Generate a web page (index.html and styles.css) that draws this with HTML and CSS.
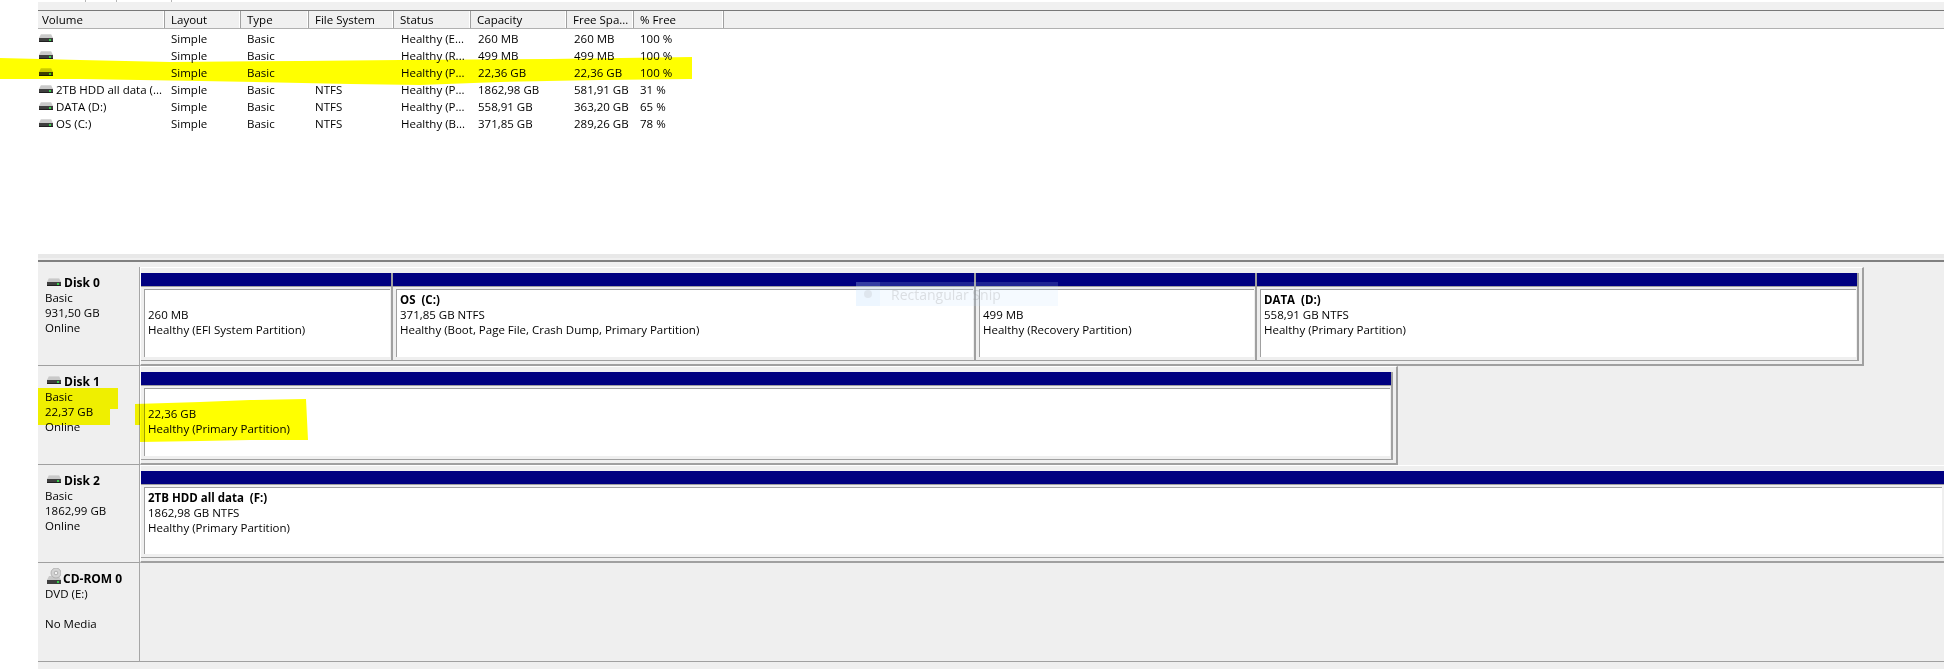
FILE: index.html
```html
<!DOCTYPE html>
<html lang="en">
<head>
<meta charset="utf-8">
<title>Disk Management</title>
<link rel="stylesheet" href="styles.css">
</head>
<body>
<svg width="0" height="0" class="defs">
  <symbol id="hdd" viewBox="0 0 14 8">
    <path d="M2 0H12L14 4H0Z" fill="#c9c9c9"/>
    <path d="M2 0H12" stroke="#e8e8e8" stroke-width="1"/>
    <rect x="0" y="4" width="14" height="4" fill="#3f3f3f"/>
    <rect x="0" y="7" width="14" height="1" fill="#1f1f1f"/>
    <rect x="10" y="5" width="2" height="2" fill="#35d04a"/>
  </symbol>
  <symbol id="cd" viewBox="0 0 14 16">
    <path d="M2 8H12L14 12H0Z" fill="#c9c9c9"/>
    <rect x="0" y="12" width="14" height="4" fill="#3f3f3f"/>
    <rect x="10" y="13" width="2" height="2" fill="#35d04a"/>
    <circle cx="9" cy="5" r="5" fill="#d4d4d4" stroke="#a8a8a8" stroke-width=".8"/>
    <circle cx="9" cy="5" r="1.8" fill="#f4f4f4" stroke="#8f8f8f" stroke-width=".6"/>
  </symbol>
</svg>

<main class="console">
  <div class="ticks"><i class="tick tick-a"></i><i class="tick tick-b"></i><i class="tick tick-c"></i></div>
  <div class="band"></div>

  <section class="volumes">
    <div class="head">
      <div class="hcell hcell-first">Volume</div>
      <div class="hcell">Layout</div>
      <div class="hcell">Type</div>
      <div class="hcell">File System</div>
      <div class="hcell">Status</div>
      <div class="hcell">Capacity</div>
      <div class="hcell">Free Spa...</div>
      <div class="hcell">% Free</div>
    </div>
    <div class="vrow"><div class="vol"><svg class="ico-s"><use href="#hdd"/></svg></div><div>Simple</div><div>Basic</div><div></div><div>Healthy (E...</div><div>260 MB</div><div>260 MB</div><div>100 %</div></div>
    <div class="vrow"><div class="vol"><svg class="ico-s"><use href="#hdd"/></svg></div><div>Simple</div><div>Basic</div><div></div><div>Healthy (R...</div><div>499 MB</div><div>499 MB</div><div>100 %</div></div>
    <div class="vrow"><div class="vol"><svg class="ico-s"><use href="#hdd"/></svg></div><div>Simple</div><div>Basic</div><div></div><div>Healthy (P...</div><div>22,36 GB</div><div>22,36 GB</div><div>100 %</div></div>
    <div class="vrow"><div class="vol"><svg class="ico-s"><use href="#hdd"/></svg>2TB HDD all data (...</div><div>Simple</div><div>Basic</div><div>NTFS</div><div>Healthy (P...</div><div>1862,98 GB</div><div>581,91 GB</div><div>31 %</div></div>
    <div class="vrow"><div class="vol"><svg class="ico-s"><use href="#hdd"/></svg>DATA (D:)</div><div>Simple</div><div>Basic</div><div>NTFS</div><div>Healthy (P...</div><div>558,91 GB</div><div>363,20 GB</div><div>65 %</div></div>
    <div class="vrow"><div class="vol"><svg class="ico-s"><use href="#hdd"/></svg>OS (C:)</div><div>Simple</div><div>Basic</div><div>NTFS</div><div>Healthy (B...</div><div>371,85 GB</div><div>289,26 GB</div><div>78 %</div></div>
  </section>

  <div class="splitter"></div>

  <section class="disks">
    <div class="disk">
      <div class="label"><div class="title"><svg class="ico-s"><use href="#hdd"/></svg>Disk 0</div><div>Basic</div><div>931,50 GB</div><div>Online</div></div>
      <div class="map"><div class="box">
        <div class="part" style="width:252px"><div class="bar"></div><div class="body"><div class="name"></div><div>260 MB</div><div>Healthy (EFI System Partition)</div></div></div>
        <div class="part" style="width:583px"><div class="bar"></div><div class="body"><div class="name">OS&nbsp; (C:)</div><div>371,85 GB NTFS</div><div>Healthy (Boot, Page File, Crash Dump, Primary Partition)</div></div></div>
        <div class="part" style="width:281px"><div class="bar"></div><div class="body"><div class="name"></div><div>499 MB</div><div>Healthy (Recovery Partition)</div></div></div>
        <div class="part" style="width:602px"><div class="bar"></div><div class="body"><div class="name">DATA&nbsp; (D:)</div><div>558,91 GB NTFS</div><div>Healthy (Primary Partition)</div></div></div>
      </div></div>
    </div>
    <div class="disk">
      <div class="label"><div class="title"><svg class="ico-s"><use href="#hdd"/></svg>Disk 1</div><div>Basic</div><div>22,37 GB</div><div>Online</div></div>
      <div class="map"><div class="box">
        <div class="part" style="width:1252px"><div class="bar"></div><div class="body"><div class="name"></div><div>22,36 GB</div><div>Healthy (Primary Partition)</div></div></div>
      </div></div>
    </div>
    <div class="disk">
      <div class="label"><div class="title"><svg class="ico-s"><use href="#hdd"/></svg>Disk 2</div><div>Basic</div><div>1862,99 GB</div><div>Online</div></div>
      <div class="map"><div class="box">
        <div class="part part-open" style="width:1804px"><div class="bar"></div><div class="body"><div class="name">2TB HDD all data&nbsp; (F:)</div><div>1862,98 GB NTFS</div><div>Healthy (Primary Partition)</div></div></div>
      </div></div>
    </div>
    <div class="disk">
      <div class="label"><div class="title title-cd"><svg class="ico-cd"><use href="#cd"/></svg>CD-ROM 0</div><div>DVD (E:)</div><div class="blank"></div><div>No Media</div></div>
      <div class="map map-empty"></div>
    </div>
  </section>
</main>

<div class="snip"><span class="snip-icon"><i class="snip-dot"></i></span><span class="snip-text">Rectangular Snip</span></div>

<svg class="marker" viewBox="0 0 1944 669" width="1944" height="669" aria-hidden="true">
  <polygon points="0,58 80,60 170,62 300,61 400,60 550,59 692,57 692,79 600,80 500,82 420,85 350,84 200,81 80,79 0,79"/>
  <polygon points="38,388 118,388 118,409 110,409 110,425 38,425"/>
  <polygon points="135,404 200,402 250,400 306,399 308,440 250,440 200,441 140,442 140,425 135,425"/>
</svg>
</body>
</html>
```
FILE: styles.css
```css
* { box-sizing: border-box; }
html, body { margin: 0; padding: 0; height: 669px; background: #fff; overflow: hidden; }
body { position: relative; font-family: "Open Sans", "Noto Sans", sans-serif; font-size: 11.5px; line-height: 15px; color: #000; }
.defs { position: absolute; }

.console { margin-left: 38px; height: 669px; overflow: hidden; background: #efefef; }

.ticks { height: 2px; background: #fff; display: flex; }
.tick { width: 1px; height: 2px; background: #b5b5b5; }
.tick-a { margin-left: 47px; }
.tick-b { margin-left: 30px; }
.tick-c { margin-left: 54px; }
.band { height: 8px; background: #f0f0f0; }

.volumes { height: 244px; background: #fff; }
.head, .vrow { display: grid; grid-template-columns: 127px 76px 68px 85px 77px 96px 67px 90px; }
.head { height: 19px; background: #f0f0f0; border-top: 1px solid #787878; border-bottom: 1px solid #b0b0b0; }
.hcell { padding-left: 6px; line-height: 17px; border-right: 1px solid #a0a0a0; box-shadow: inset -1px 0 0 #fff; white-space: nowrap; overflow: hidden; }
.hcell-first { padding-left: 4px; }
.vrow { height: 17px; line-height: 17px; white-space: nowrap; }
.head + .vrow { margin-top: 1px; }
.vrow > div { padding-left: 6px; overflow: hidden; }
.vrow > div:nth-child(n+5):nth-child(-n+7) { padding-left: 7px; }
.vrow > .vol { padding-left: 1px; display: flex; align-items: center; }
.ico-s { width: 14px; height: 8px; margin: -2px 3px 0 0; flex: none; }
.ico-cd { width: 14px; height: 16px; margin-right: 2px; flex: none; }

.splitter { height: 8px; background: #f0f0f0; border-bottom: 2px solid #808080; box-shadow: inset 0 4px 0 #e8e8e8; }

.disks { padding-top: 5.3px; }
.disk { display: flex; height: 98.7px; }
.label { flex: none; width: 102px; padding: 8px 0 0 7px; border-right: 1px solid #a6a6a6; border-bottom: 1px solid #a0a0a0; white-space: nowrap; }
.title { display: flex; align-items: center; height: 15px; margin-left: 2px; font-weight: 700; font-size: 12px; }
.title-cd .ico-cd { margin-top: -6px; }
.blank { height: 15px; }
.map { flex: 1; display: flex; min-width: 0; }
.map-empty { border-bottom: 1px solid #a0a0a0; }
.box { display: flex; flex: none; height: 100%; padding: 5px 3px 3px 0; background: #efefef; border-style: solid; border-width: 1px 2px 2px 1px; border-color: #fff #a0a0a0 #a0a0a0 #fff; }
.part { flex: none; display: flex; flex-direction: column; border-right: 2px solid #a0a0a0; border-bottom: 1px solid #a0a0a0; }
.bar { height: 14px; flex: none; background: #000080; border-bottom: 1px solid #a0a0a0; }
.body { flex: 1; margin: 2px 1px 3px 3px; padding: 2px 0 0 3px; background: #fff; border-top: 1px solid #a0a0a0; border-left: 1px solid #a0a0a0; white-space: nowrap; overflow: hidden; }
.name { height: 15px; font-weight: 700; }
.part-open { border-right-color: #efefef; }
.part-open .bar { margin-right: -2px; }

.snip { position: absolute; left: 856px; top: 282px; width: 202px; height: 24px; display: flex; align-items: center; background: rgba(190, 225, 255, .16); pointer-events: none; }
.snip-icon { width: 24px; height: 24px; display: flex; align-items: center; justify-content: center; background: rgba(190, 225, 255, .14); }
.snip-dot { width: 8px; height: 8px; border-radius: 50%; background: rgba(170, 170, 170, .2); }
.snip-text { margin-left: 11px; font-size: 14px; color: rgba(150, 150, 150, .28); white-space: nowrap; }

.marker { position: absolute; left: 0; top: 0; pointer-events: none; mix-blend-mode: multiply; }
.marker polygon { fill: #ffff00; }
```
